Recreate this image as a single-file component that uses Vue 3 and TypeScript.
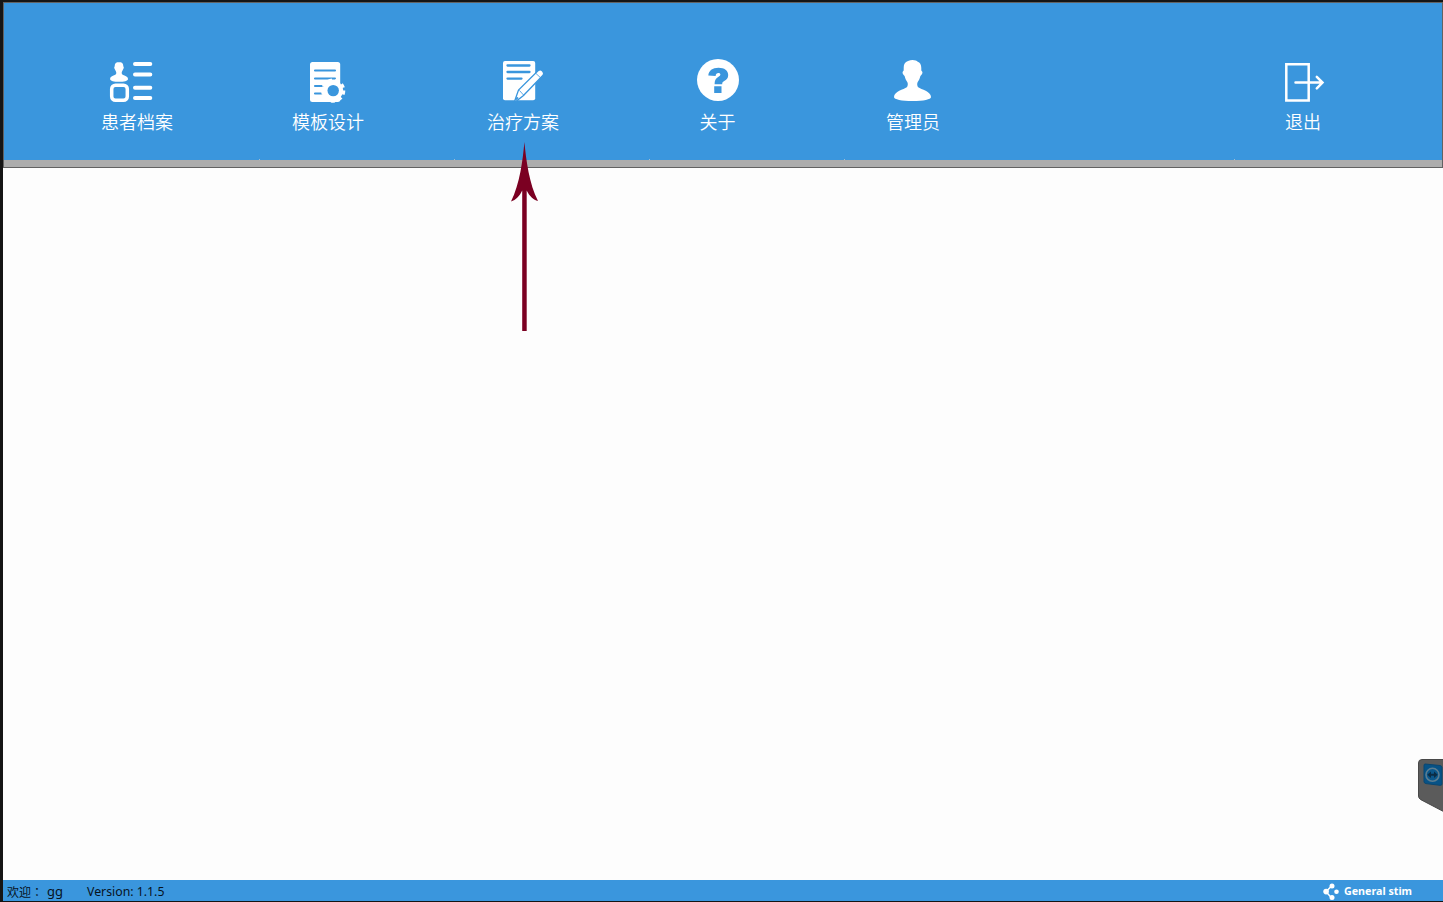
<script setup lang="ts">
interface MenuItem {
  id: string
  label: string
  column: number
  view: string
}

const items: MenuItem[] = [
  { id: 'patients', label: '患者档案', column: 1, view: '102 50 60 60' },
  { id: 'template', label: '模板设计', column: 2, view: '297 50 60 60' },
  { id: 'plan', label: '治疗方案', column: 3, view: '492 50 60 60' },
  { id: 'about', label: '关于', column: 4, view: '687 50 60 60' },
  { id: 'admin', label: '管理员', column: 5, view: '882 50 60 60' },
  { id: 'exit', label: '退出', column: 7, view: '1272 50 60 60' },
]
</script>

<template>
  <div class="window">
    <header class="toolbar">
      <nav class="menu">
        <button v-for="item in items" :key="item.id" :class="['entry', 'col-' + item.column]">
          <svg class="icon" :viewBox="item.view" fill="#fff">
            <g v-if="item.id === 'patients'">
              <path d="M119 62c-2.800 0-4.300 1.600-4.300 3.900 0 .6-.5.800-.5 1.700s.6 1.400.9 2.200c.4 1.200 1.200 1.900 1.200 3.100 0 1.300-.8 1.800-2.800 2.500-2.300.8-3.400 1.800-3.400 3.500 0 2.100 4 2.900 8.900 2.900s9-.8 9-2.900c0-1.700-1.300-2.700-3.500-3.500-2-.7-2.800-1.200-2.800-2.500 0-1.200.8-1.900 1.200-3.100.3-.8.9-1.300.9-2.200s-.5-1.100-.5-1.700c0-2.300-1.500-3.900-4.300-3.900z" />
              <rect x="111.700" y="85.200" width="15.600" height="15.100" rx="3.800" fill="none" stroke="#fff" stroke-width="3.500" />
              <path d="M135 64h15.300M135 74.600h15.300M135 87.800h15.300M135 98h15.300" fill="none" stroke="#fff" stroke-width="4" stroke-linecap="round" />
            </g>
            <g v-else-if="item.id === 'template'">
              <rect x="310" y="62" width="30.200" height="40" rx="2.500" />
              <path d="M315 70.500h20M315 78.500h20M315 86h8.500M315 93.500h6.500" stroke="#3a96dd" stroke-width="2.100" stroke-linecap="round" />
              <path d="M341 78h5v7h-5zM341 98h4v5h-4z" fill="#3a96dd" />
              <circle cx="333.200" cy="90.600" r="10" />
              <circle cx="333.200" cy="90.600" r="10.600" fill="none" stroke="#fff" stroke-width="3" stroke-dasharray="4 3.400" />
              <circle cx="333.200" cy="90.600" r="5.700" fill="#3a96dd" />
            </g>
            <g v-else-if="item.id === 'plan'">
              <rect x="503" y="61" width="32.200" height="39.300" rx="2" />
              <path d="M507.500 65.500h22M507.500 72h22M507.500 78.600h14" stroke="#3a96dd" stroke-width="2.300" stroke-linecap="round" />
              <path d="M514.500 101.500l4-11.500 19.500-19.300c3-2.300 7.200 1.300 5 4.600l-19.800 20.500-7.500 5.700z" stroke="#3a96dd" stroke-width="1.300" />
              <path d="M519.300 90.300l4.500 5M536 73.500l4.300 4" fill="none" stroke="#3a96dd" stroke-width=".8" />
              <path d="M515.200 101l1.500-4.500 2 1.600z" fill="#3a96dd" />
            </g>
            <g v-else-if="item.id === 'about'">
              <circle cx="718" cy="80" r="21" />
              <path d="M708.300 75.400c.4-4.700 4.100-7.700 10.200-7.700 5.900 0 9.700 2.800 9.700 7.200 0 3.300-1.700 4.800-4 6.100-1.600.9-2 1.600-2 3.200h-7.600c0-3.700 1-5.700 3.600-7.300 1.500-.9 2.200-1.400 2.200-2.300 0-1.100-.8-1.600-2-1.600-1.600 0-2.500.9-2.800 2.900zM714.200 86.300h7.300v6.700h-7.300z" fill="#3a96dd" />
            </g>
            <g v-else-if="item.id === 'admin'">
              <path d="M912.500 60c-3.300 0-4.700 1.200-6 1.700-1.900.8-2.800 3.200-2.800 6.200 0 2 .1 2.900-.7 3.400-1.100.8-.2 3.700 1.600 4.600.7 3.100 1.800 4.600 2.800 6.400.7 1.200.5 3.900-.6 4.900-3 2.300-12.800 4-12.800 9.800 0 2.500 7.500 4 18.500 4s18.500-1.500 18.500-4c0-5.800-9.800-7.500-12.800-9.800-1.100-1-1.300-3.700-.6-4.900 1-1.800 2.100-3.300 2.800-6.400 1.800-.9 2.700-3.800 1.600-4.600-.8-.5-.7-1.400-.7-3.400 0-3.400-1.400-5.500-3.600-6.200-.8-.9-2.700-1.700-5.200-1.700z" />
            </g>
            <g v-else fill="none" stroke="#fff" stroke-width="2.500">
              <path d="M1286.300 64.300h22.400v36.300h-22.400z" />
              <path d="M1295.500 82.500h26.500M1316.800 76.800l5.700 5.700-5.700 5.900" stroke-linecap="round" />
            </g>
          </svg>
          <span class="label">{{ item.label }}</span>
        </button>
      </nav>
      <div class="ticks"><i v-for="n in 6" :key="n" :class="{ hidden: n === 5 }"></i></div>
      <div class="strip"></div>
    </header>

    <main class="workspace"></main>

    <footer class="status">
      <span class="welcome">欢迎<span class="colon">：</span></span>
      <span class="user">gg</span>
      <span class="version">Version: 1.1.5</span>
      <div class="brand">
        <svg class="brand-mark" viewBox="0 0 17 18" fill="#fff">
          <path d="M8.500 3L3 8.800l5.500 6" fill="none" stroke="#fff" stroke-width="1.500" />
          <circle cx="9" cy="3" r="2.500" />
          <circle cx="3.100" cy="8.600" r="2.800" />
          <circle cx="9" cy="14.600" r="2.500" />
          <circle cx="13.500" cy="8.800" r="2.300" />
        </svg>
        <svg class="brand-name" viewBox="0 0 70 18"><text x="0" y="12" textLength="68" lengthAdjust="spacingAndGlyphs">General stim</text></svg>
      </div>
    </footer>

    <svg class="pointer" viewBox="510 140 30 192" fill="#7b0022">
      <path d="M524.400 142c1.700 18 4.800 42 13.600 59-4.500-1-8.500-4.800-11.300-10.500V331h-4.500v-140.500c-2.700 5.700-6.200 9.500-11.200 11 8.800-17.500 11.800-41.500 13.400-59.500z" />
    </svg>

    <svg class="remote" viewBox="0 0 25 54">
      <path d="M4 .5h21.500v52L2.500 40.500Q.5 39 .5 37V4Q.5.500 4 .5z" fill="#5b5b5b" stroke="#484848" />
      <path d="M7 5l15 1.500q2 .3 2 2v16.500q0 1.500-2 1.300l-14-1.700q-2-.3-2-2V6.500Q6 5 7 5z" fill="#075286" stroke="#0a4670" />
      <circle cx="14.500" cy="15.800" r="6.500" fill="#0b578b" stroke="#5c7d91" stroke-width="1.600" />
      <path d="M9.300 15.800l3.700-3.200v2.200h3v-2.200l3.700 3.200-3.700 3.200v-2.200h-3v2.200z" fill="#0b2c45" />
    </svg>
  </div>
</template>

<style>
html, body { margin: 0; overflow: hidden; }
</style>

<style scoped>
.window {
  position: relative;
  display: flex;
  flex-direction: column;
  box-sizing: border-box;
  width: 1443px;
  height: 902px;
  padding: 2px 0 1px 3px;
  background: #151515;
  font-family: "Noto Sans", "Noto Sans CJK SC", sans-serif;
}
.toolbar {
  box-sizing: border-box;
  height: 166px;
  border: 1px solid #626262;
  background: #3a96dd;
}
.menu {
  display: grid;
  grid-template-columns: repeat(7, 195px);
  height: 157px;
  padding-left: 31px;
}
.entry {
  display: flex;
  flex-direction: column;
  align-items: center;
  margin: 0;
  padding: 47px 0 0;
  border: 0;
  background: none;
  color: #fff;
}
.col-7 { grid-column: 7; }
.icon {
  display: block;
  align-self: flex-start;
  width: 60px;
  height: 60px;
  margin-left: 67px;
}
.label {
  margin: -1px 0 0 1px;
  font: 350 18px/24px "Noto Sans CJK SC", sans-serif;
  white-space: nowrap;
}
.col-1 .label { margin-left: 9px; }
.col-4 .label { margin-left: 0; }
.ticks {
  display: grid;
  grid-template-columns: repeat(6, 195px);
  height: 1px;
  margin: -1px 0 0 255px;
  overflow: hidden;
}
.ticks i { width: 1px; height: 1px; background: #9dbdd5; }
.ticks .hidden { visibility: hidden; }
.strip { height: 7px; background: #adadad; }
.workspace { flex: 1; background: #fdfdfd; }
.status {
  display: flex;
  align-items: center;
  box-sizing: border-box;
  height: 21px;
  padding: 2px 0 0 4px;
  background: #3a96dd;
  color: #07131d;
  font-size: 12px;
  line-height: 19px;
  white-space: nowrap;
}
.welcome { width: 40px; }
.colon { font-family: "Noto Sans CJK TC", sans-serif; }
.user { width: 40px; font-size: 13px; }
.version { font-size: 12.300px; }
.brand { display: flex; margin-left: auto; padding-right: 29px; }
.brand-mark { width: 17px; height: 18px; margin-right: 4px; }
.brand-name { width: 70px; height: 18px; }
.brand-name text { font: 700 11px "Noto Sans", sans-serif; fill: #fff; }
.pointer {
  position: absolute;
  left: 510px;
  top: 140px;
  width: 30px;
  height: 192px;
}
.remote {
  position: absolute;
  right: 0;
  top: 759px;
  width: 25px;
  height: 54px;
}
</style>
